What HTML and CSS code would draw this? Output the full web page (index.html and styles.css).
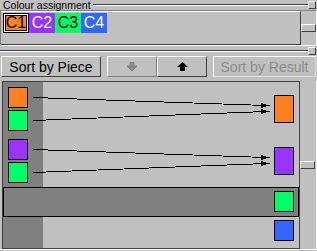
FILE: index.html
```html
<!DOCTYPE html>
<html lang="en">
  <head>
    <meta charset="UTF-8" />
    <meta name="viewport" content="width=device-width, initial-scale=1.0" />
    <title>Colour assignment</title>
    <link rel="stylesheet" href="styles.css">
  </head>
  <body>
    <div class="legend-row">
      <span class="legend">Colour assignment</span>
      <span class="rule"></span>
      <span class="knob"></span>
    </div>
    <div class="group">
      <div class="group-view">
        <div class="chip chip-orange selected">C1</div>
        <div class="chip chip-purple">C2</div>
        <div class="chip chip-green">C3</div>
        <div class="chip chip-blue">C4</div>
      </div>
      <div class="vscroll"><div class="thumb thumb-top"></div></div>
    </div>
    <div class="split-row">
      <span class="rule"></span>
      <span class="knob"></span>
    </div>
    <div class="toolbar">
      <button class="btn btn-wide" type="button">Sort by Piece</button>
      <button class="btn btn-icon btn-down" type="button" disabled>
        <svg width="10" height="9" viewBox="0 0 10 9">
          <polygon points="3,0 7,0 7,4 10,4 5,9 0,4 3,4" fill="#8a8a8a" stroke="#707070" stroke-width="0.6" />
        </svg>
      </button>
      <button class="btn btn-icon btn-up" type="button">
        <svg width="11" height="9" viewBox="0 0 11 9">
          <polygon points="5.5,0 11,5 8,5 8,9 3,9 3,5 0,5" fill="#000" />
        </svg>
      </button>
      <button class="btn btn-wide btn-result" type="button" disabled>Sort by Result</button>
    </div>
    <div class="board">
      <div class="board-view">
        <div class="piece-column"></div>
        <div class="result-row"></div>
        <svg class="links" width="296" height="166" viewBox="0 0 296 166" shape-rendering="crispEdges">
          <g transform="translate(-3,-82)" stroke="#000" stroke-width="1" fill="#000">
            <line x1="33" y1="97.5" x2="266" y2="105.5" />
            <line x1="33" y1="120.5" x2="266" y2="111.5" />
            <line x1="33" y1="149.5" x2="266" y2="157.5" />
            <line x1="33" y1="172.5" x2="266" y2="163.5" />
            <polygon stroke="none" points="261,103 270,105.5 261,108" />
            <polygon stroke="none" points="261,109 270,111.5 261,114" />
            <polygon stroke="none" points="261,155 270,157.5 261,160" />
            <polygon stroke="none" points="261,161 270,163.5 261,166" />
          </g>
        </svg>
        <div class="tile tile-orange" style="left: 5px; top: 5px;"></div>
        <div class="tile tile-green" style="left: 5px; top: 28px;"></div>
        <div class="tile tile-purple" style="left: 5px; top: 57px;"></div>
        <div class="tile tile-green" style="left: 5px; top: 80px;"></div>
        <div class="tile tile-orange tall" style="left: 271px; top: 13px;"></div>
        <div class="tile tile-purple tall" style="left: 271px; top: 65px;"></div>
        <div class="tile tile-green" style="left: 271px; top: 109px;"></div>
        <div class="tile tile-blue" style="left: 271px; top: 138px;"></div>
      </div>
      <div class="vscroll"><div class="thumb thumb-board"></div></div>
    </div>
  </body>
</html>
```

FILE: styles.css
```css
/* Base window */
body {
  margin: 0;
  width: 317px;
  height: 251px;
  overflow: hidden;
  background-color: #c0c0c0;
  font-family: "Liberation Sans", Arial, sans-serif;
  color: #000;
}

/* Title line with splitter knob */
.legend-row,
.split-row {
  display: flex;
  align-items: center;
}

.legend-row {
  height: 10px;
}

.legend {
  flex: none;
  font-size: 10.5px;
  line-height: 10px;
  padding-left: 3px;
  white-space: nowrap;
}

.rule {
  flex: 1;
  height: 0;
  border-top: 1px solid #404040;
  border-bottom: 1px solid #ffffff;
}

.legend-row .rule {
  margin-left: 2px;
}

.knob {
  width: 6px;
  height: 6px;
  border: 1px solid;
  border-color: #ffffff #404040 #404040 #ffffff;
  margin-right: 1px;
}

.split-row {
  height: 9px;
}

/* Colour assignment box */
.group {
  display: flex;
  height: 34px;
  border: 1px solid;
  border-color: #808080 #ffffff #ffffff #808080;
}

.group-view {
  flex: 1;
  display: flex;
  align-items: flex-start;
  padding: 1px 0 0 2px;
  border-top: 1px solid #ffffff;
  border-right: 1px solid #404040;
  border-bottom: 1px solid #404040;
}

.chip {
  width: 26px;
  height: 20px;
  box-sizing: border-box;
  display: flex;
  align-items: center;
  justify-content: center;
  font-size: 16px;
}

.chip.selected {
  border: 1px solid #000;
  box-shadow: inset 0 0 0 1px #fff, inset 0 0 0 2px #000;
}

.chip-orange { background-color: #ff8020; }
.chip-purple { background-color: #9933ff; color: #fff; }
.chip-green { background-color: #00ff66; }
.chip-blue { background-color: #3366ff; color: #fff; }

/* Scrollbar strips */
.vscroll {
  width: 15px;
  position: relative;
}

.thumb {
  height: 6px;
  border: 1px solid;
  border-color: #ffffff #404040 #404040 #ffffff;
}

.thumb-top {
  margin-top: 13px;
}

.thumb-board {
  margin-top: 80px;
}

/* Buttons */
.toolbar {
  display: flex;
  height: 26px;
  padding: 1px 0 0 1px;
  box-sizing: border-box;
}

.btn {
  height: 21px;
  margin: 0;
  padding: 0;
  background-color: #c0c0c0;
  border: 1px solid;
  border-color: #ffffff #404040 #404040 #ffffff;
  font-family: "Liberation Sans", Arial, sans-serif;
  font-size: 14px;
  color: #000;
  display: flex;
  align-items: center;
  justify-content: center;
}

.btn-wide {
  width: 100px;
}

.btn-icon {
  width: 50px;
}

.btn-down {
  margin-left: 6px;
  border-color: #ffffff #808080 #808080 #ffffff;
}

.btn-result {
  width: 103px;
  margin-left: 6px;
  color: #8c8c8c;
  border-color: #ffffff #dcdcdc #dcdcdc #ffffff;
}

/* Piece/result board */
.board {
  display: flex;
  height: 168px;
  border-right: 1px solid #ffffff;
  border-bottom: 1px solid #ffffff;
  width: 316px;
}

.board-view {
  position: relative;
  width: 296px;
  margin-left: 2px;
  border: 1px solid #404040;
  overflow: hidden;
}

.piece-column {
  width: 40px;
  height: 100%;
  background-color: #808080;
}

.result-row {
  position: absolute;
  left: 0;
  top: 105px;
  width: 296px;
  height: 30px;
  box-sizing: border-box;
  border: 1px solid #000;
  background-color: #808080;
}

.links {
  position: absolute;
  left: 0;
  top: 0;
}

.tile {
  position: absolute;
  width: 20px;
  height: 21px;
  box-sizing: border-box;
  border: 1px solid #000;
}

.tile.tall {
  height: 28px;
}

.tile-orange { background-color: #ff8020; }
.tile-purple { background-color: #9933ff; }
.tile-green { background-color: #00ff66; }
.tile-blue { background-color: #3366ff; }
```
